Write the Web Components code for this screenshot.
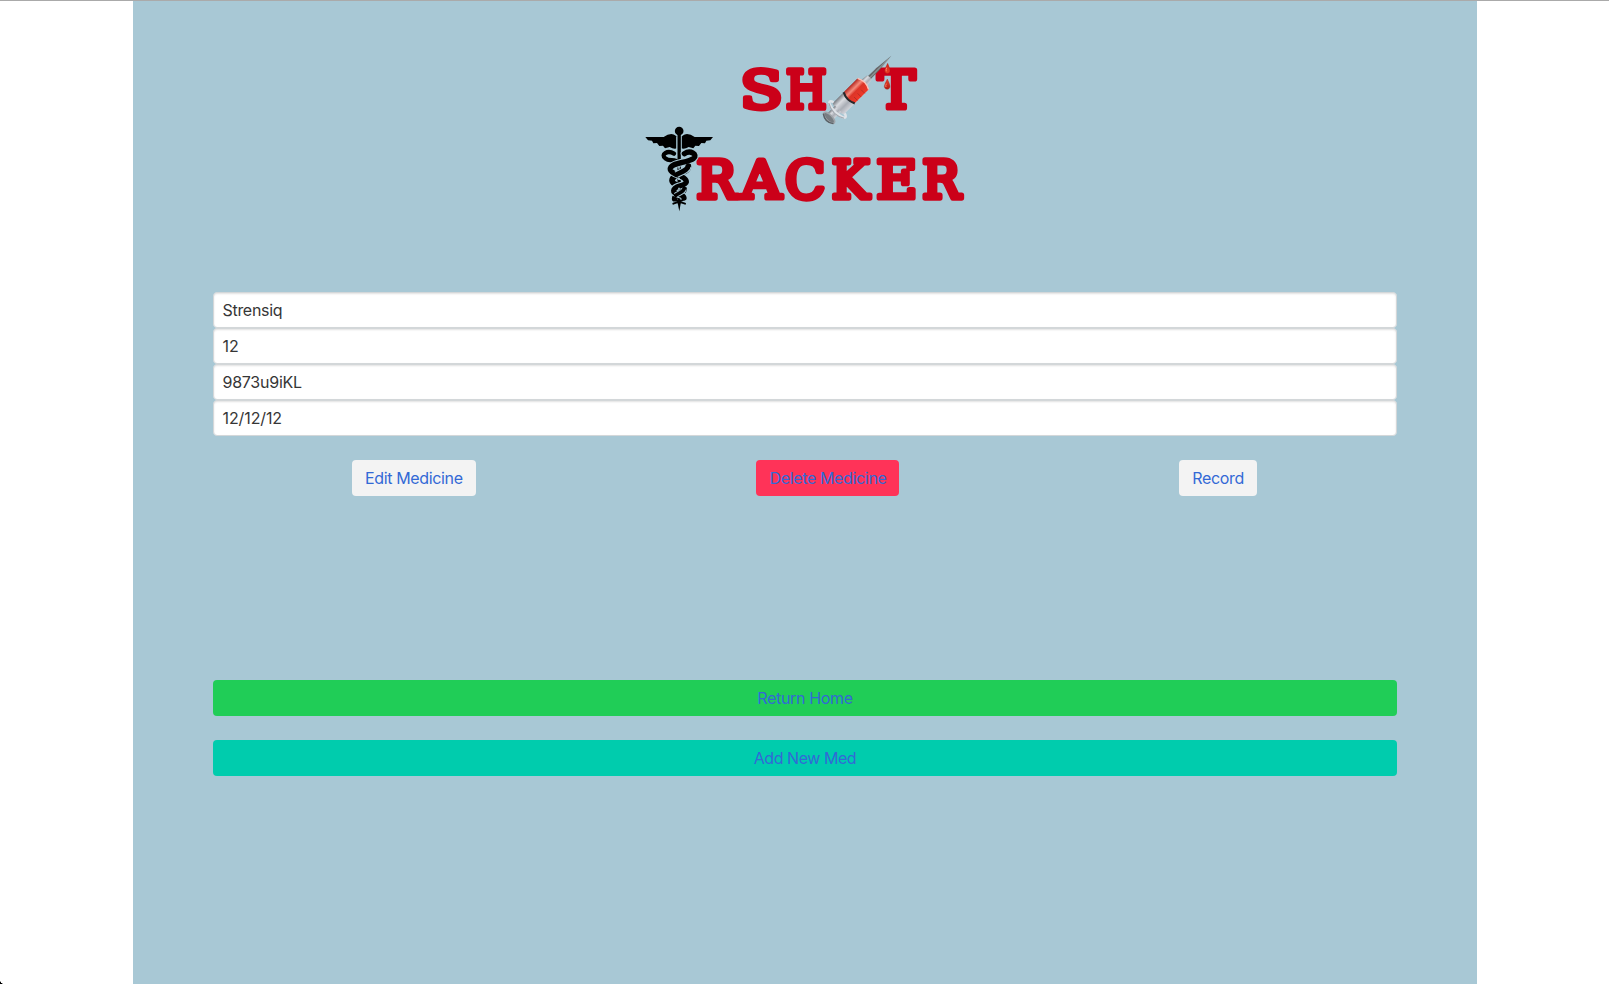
<!DOCTYPE html>
<html lang="en"><head><meta charset="utf-8"><title>Shot Tracker</title>
<style>html,body{margin:0;height:100%;background:#fff;overflow:hidden}body{font-family:Inter,"Liberation Sans",sans-serif;font-size:16px;line-height:24px}</style></head>
<body>
<shot-app>
  <shot-logo slot="logo"></shot-logo>
  <med-field style="--ls:-.3px">Strensiq</med-field><med-field style="--ls:0">12</med-field><med-field style="--ls:-.25px">9873u9iKL</med-field><med-field style="--ls:-.1px">12/12/12</med-field>
  <med-button slot="actions" style="--w:124px;margin:0 1px 0 -1px">Edit Medicine</med-button>
  <med-button slot="actions" style="--w:143px;--bg:#ff3358">Delete Medicine</med-button>
  <med-button slot="actions" style="--w:78px">Record</med-button>
  <med-button slot="nav" style="--bg:#20cd57">Return Home</med-button>
  <med-button slot="nav" style="--bg:#00ccad;letter-spacing:-.45px">Add New Med</med-button>
</shot-app>
<script>
function define(name, html){
  customElements.define(name, class extends HTMLElement{
    constructor(){super();this.attachShadow({mode:'open'}).innerHTML=html;}
  });
}
define('med-field',`<style>
:host{display:block;box-sizing:border-box;height:36px;padding:5px 8.5px;border:1px solid #d3d7d9;border-radius:4px;background:#fff;color:#363636;box-shadow:inset 0 1px 2px rgba(10,10,10,.12);letter-spacing:var(--ls,-.36px)}
</style><slot></slot>`);
define('med-button',`<style>
:host{display:flex;box-sizing:border-box;height:36px;width:var(--w,100%);align-items:center;justify-content:center;border-radius:4px;background:var(--bg,#f3f3f3);color:#3269d6;letter-spacing:-.35px;white-space:nowrap}
</style><slot></slot>`);
define('shot-logo',`<style>
:host{display:block;width:350px;height:180px}svg{display:block}
text{font-family:"DejaVu Serif",serif;font-size:158px;fill:#cb0019;stroke:#cb0019;stroke-width:5.4px;stroke-linejoin:round;vector-effect:non-scaling-stroke}
</style>
<svg width="350" height="180" viewBox="0 0 1050 540">
<defs>
<linearGradient id="red"><stop stop-color="#b52620"/><stop offset=".3" stop-color="#f58c7c"/><stop offset=".5" stop-color="#dc3528"/><stop offset="1" stop-color="#ee3828"/></linearGradient>
<linearGradient id="steel"><stop stop-color="#777a80"/><stop offset=".3" stop-color="#dadce1"/><stop offset=".65" stop-color="#aaaeb6"/><stop offset="1" stop-color="#d2d4da"/></linearGradient>
<linearGradient id="drop" x2="0" y2="1"><stop stop-color="#d42a1a"/><stop offset=".6" stop-color="#f0432a"/><stop offset="1" stop-color="#b01b12"/></linearGradient>
</defs>
<text transform="translate(330 205) scale(1.19 1)">S</text><text transform="translate(468 205) scale(.88 1)">H</text><text transform="translate(743 205) scale(1.06 1)">T</text>
<text transform="translate(199 475) scale(1.02 1)">R</text><text transform="translate(333 475) scale(1.06 1)">A</text><text transform="translate(465 475)">C</text><text transform="translate(605 475) scale(.95 1)">K</text><text transform="translate(739 475) scale(1.07 1)">E</text><text transform="translate(877 475) scale(.96 1)">R</text>
<g transform="translate(784 47) rotate(45) scale(1.07 1.09)">
<path d="M0 0L-5 52-6 93H6L5 52Z" fill="#666b6c"/><path d="M1 12L1 90" stroke="#b6babd" stroke-width="2"/>
<path d="M-9 86Q0 81 9 86L12 108H-12Z" fill="url(#steel)"/>
<path d="M-22 110Q0 98 22 110V207Q0 218-22 207Z" fill="url(#steel)"/>
<path d="M-22 110Q0 98 22 110V163Q0 174-22 163Z" fill="url(#red)"/>
<path d="M-22 110Q0 98 22 110" fill="none" stroke="#ffc3b7" stroke-width="4"/>
<path d="M-22 164Q0 175 22 164" fill="none" stroke="#27272a" stroke-width="6"/>
<path d="M8 125H22M8 139H22M8 153H22" stroke="#a52a22" stroke-width="2"/>
<path d="M-12 207H12V240H-12Z" fill="url(#steel)"/>
<path d="M-22 203A31 9 0 1 0 22 203" fill="none" stroke="#dfe3e8" stroke-width="7"/>
<path d="M-30 214Q0 231 30 214" fill="none" stroke="#a1a6ad" stroke-width="3"/>
<ellipse cy="242" rx="20" ry="8" fill="#777d82" stroke="#a0a5aa" stroke-width="4"/><path d="M-20 245Q0 260 20 245" fill="none" stroke="#596065" stroke-width="4"/>
</g>
<path d="M773 70Q764 88 764 92C764 103 780 103 780 92Q780 86 773 70M772 117Q763 134 763 139C763 151 780 151 780 139Q780 133 772 117" fill="url(#drop)" stroke="#a51a13" stroke-width="1"/>
<path d="M770 83Q767 90 769 94M769 131Q766 137 768 141" stroke="#ff8068" stroke-width="3" fill="none"/>
<g>
<path d="M46 291H101Q113 282 124 282Q139 284 143 295V324Q132 329 119 321L105 325 99 317 88 318 81 309 70 310 66 302 54 301Z"/>
<path d="M249 291H194Q182 282 171 282Q156 284 152 295V324Q163 329 176 321L190 325 196 317 207 318 214 309 225 310 229 302 241 301Z"/>
<path d="M147 290V365" stroke="#a8c8d5" stroke-width="17"/>
<path d="M147.500 280V490" stroke="#000" stroke-width="10"/><circle cx="147.500" cy="273" r="13"/>
<g fill="none" stroke-linecap="round">
<path d="M132 341C112 329 91 344 106 355C115 363 127 359 139 363" stroke="#000" stroke-width="13"/>
<path d="M175 378C180 400 126 400 126 422C128 440 164 435 162 449C160 463 134 462 134 476" stroke="#000" stroke-width="17"/>
<path d="M163 341C182 329 204 344 191 355C171 370 118 367 121 389C124 404 170 407 169 426C166 440 132 435 131 452C130 465 161 460 162 474" stroke="#a8c8d5" stroke-width="22"/>
<path d="M163 341C182 329 204 344 191 355C171 370 118 367 121 389C124 404 170 407 169 426C166 440 132 435 131 452C130 465 161 460 162 474" stroke="#000" stroke-width="16"/>
<path d="M174 380C174 391 153 396 139 404" stroke="#a8c8d5" stroke-width="21" stroke-linecap="butt"/>
<path d="M175 377C174 391 153 396 139 404" stroke="#000" stroke-width="15"/>
<path d="M162 448C161 458 145 459 137 466" stroke="#a8c8d5" stroke-width="16" stroke-linecap="butt"/>
<path d="M163 445C161 458 145 459 137 466" stroke="#000" stroke-width="11"/>
<path d="M134 474Q134 481 144 484L165 491M163 470Q162 481 150 484L130 491" stroke="#000" stroke-width="6"/>
</g><path d="M141 480H154L148 514Z"/>
<path d="M147 380V386M147 413V420M147 443V447" stroke="#a8c8d5" stroke-width="5"/>
</g></svg>`);
define('shot-app',`<style>
:host{display:flex;flex-direction:column;position:relative;height:984px;box-sizing:border-box;border-top:1px solid #aaa}
main{box-sizing:border-box;width:1344px;flex:1;margin-left:133px;background:#a8c8d5;padding:39px 80px 0;display:flex;flex-direction:column}
header{display:flex;justify-content:center;height:252px}
.fields{height:144px}.actions{display:flex;justify-content:space-around;margin-top:24px;height:36px}
nav{display:flex;flex-direction:column;gap:24px;margin-top:184px}
.corner{position:absolute;left:0;bottom:0;width:4px;height:4px;background:radial-gradient(circle at 100% 0,transparent 3.6px,#000 4.2px)}
</style><main><header><slot name="logo"></slot></header><div class="fields"><slot></slot></div><div class="actions"><slot name="actions"></slot></div><nav><slot name="nav"></slot></nav></main><div class="corner"></div>`);
</script></body></html>
